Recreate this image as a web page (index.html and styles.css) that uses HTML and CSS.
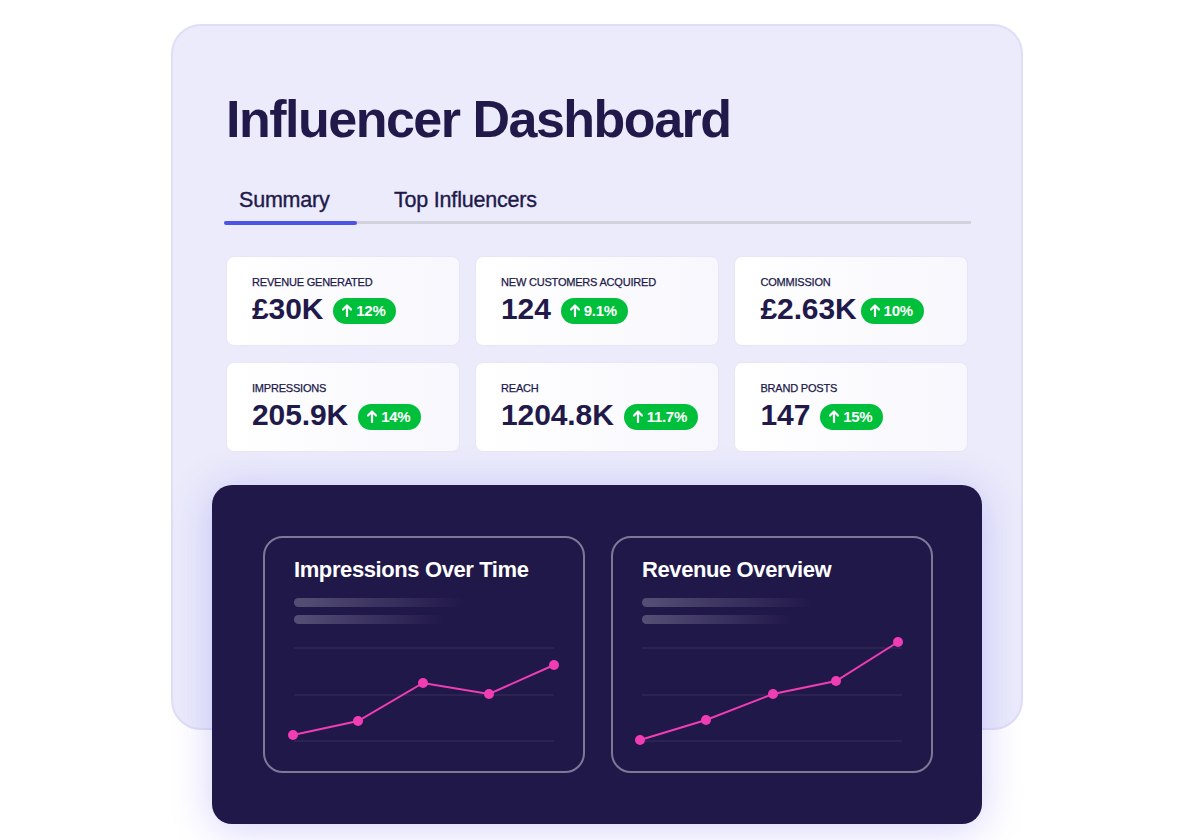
FILE: index.html
```html
<html>
<head>
  <title>Influencer Dashboard</title>
  <link rel="stylesheet" href="styles.css">
</head>
<body>
  <div class="page">
    <div class="board">
      <h1 class="title">Influencer Dashboard</h1>

      <div class="tabs">
        <div class="tab active">Summary</div>
        <div class="tab">Top Influencers</div>
      </div>

      <div class="stats">
        <div class="stat">
          <div class="stat-label">Revenue Generated</div>
          <div class="stat-row">
            <span class="stat-value">£30K</span>
            <span class="badge"><svg width="10" height="13" viewBox="0 0 10 13"><path d="M5 12V1.5M1 5.5L5 1.5L9 5.5" /></svg>12%</span>
          </div>
        </div>
        <div class="stat">
          <div class="stat-label">New Customers Acquired</div>
          <div class="stat-row">
            <span class="stat-value">124</span>
            <span class="badge"><svg width="10" height="13" viewBox="0 0 10 13"><path d="M5 12V1.5M1 5.5L5 1.5L9 5.5" /></svg>9.1%</span>
          </div>
        </div>
        <div class="stat">
          <div class="stat-label">Commission</div>
          <div class="stat-row tight">
            <span class="stat-value">£2.63K</span>
            <span class="badge"><svg width="10" height="13" viewBox="0 0 10 13"><path d="M5 12V1.5M1 5.5L5 1.5L9 5.5" /></svg>10%</span>
          </div>
        </div>
        <div class="stat">
          <div class="stat-label">Impressions</div>
          <div class="stat-row">
            <span class="stat-value">205.9K</span>
            <span class="badge"><svg width="10" height="13" viewBox="0 0 10 13"><path d="M5 12V1.5M1 5.5L5 1.5L9 5.5" /></svg>14%</span>
          </div>
        </div>
        <div class="stat">
          <div class="stat-label">Reach</div>
          <div class="stat-row">
            <span class="stat-value">1204.8K</span>
            <span class="badge"><svg width="10" height="13" viewBox="0 0 10 13"><path d="M5 12V1.5M1 5.5L5 1.5L9 5.5" /></svg>11.7%</span>
          </div>
        </div>
        <div class="stat">
          <div class="stat-label">Brand Posts</div>
          <div class="stat-row">
            <span class="stat-value">147</span>
            <span class="badge"><svg width="10" height="13" viewBox="0 0 10 13"><path d="M5 12V1.5M1 5.5L5 1.5L9 5.5" /></svg>15%</span>
          </div>
        </div>
      </div>

      <div class="charts">
        <div class="chart-card">
          <div class="chart-title">Impressions Over Time</div>
          <div class="skeleton long"></div>
          <div class="skeleton short"></div>
          <svg class="chart" width="260" height="110" viewBox="0 0 260 110">
            <line class="grid" x1="0" y1="8" x2="260" y2="8" />
            <line class="grid" x1="0" y1="55" x2="260" y2="55" />
            <line class="grid" x1="0" y1="101" x2="260" y2="101" />
            <polyline class="line" points="-1,95 64,81 129,43 195,54 260,25" />
            <circle class="dot" cx="-1" cy="95" r="5" />
            <circle class="dot" cx="64" cy="81" r="5" />
            <circle class="dot" cx="129" cy="43" r="5" />
            <circle class="dot" cx="195" cy="54" r="5" />
            <circle class="dot" cx="260" cy="25" r="5" />
          </svg>
        </div>
        <div class="chart-card">
          <div class="chart-title">Revenue Overview</div>
          <div class="skeleton long"></div>
          <div class="skeleton short"></div>
          <svg class="chart" width="260" height="110" viewBox="0 0 260 110">
            <line class="grid" x1="0" y1="8" x2="260" y2="8" />
            <line class="grid" x1="0" y1="55" x2="260" y2="55" />
            <line class="grid" x1="0" y1="101" x2="260" y2="101" />
            <polyline class="line" points="-2,100 64,80 131,54 194,41 256,2" />
            <circle class="dot" cx="-2" cy="100" r="5" />
            <circle class="dot" cx="64" cy="80" r="5" />
            <circle class="dot" cx="131" cy="54" r="5" />
            <circle class="dot" cx="194" cy="41" r="5" />
            <circle class="dot" cx="256" cy="2" r="5" />
          </svg>
        </div>
      </div>
    </div>
  </div>
</body>
</html>
```

FILE: styles.css
```css
body {
  margin: 0;
  padding: 0;
  background-color: #fff;
  font-family: "Liberation Sans", Arial, sans-serif;
  color: #21194a;
}

.page {
  padding-top: 24px;
}

.board {
  box-sizing: border-box;
  width: 852px;
  height: 706px;
  margin: 0 auto;
  padding: 62px 53px 0;
  background-color: #ebebfb;
  border: 2px solid #dedef8;
  border-radius: 30px;
}

.title {
  margin: 0;
  font-size: 52px;
  line-height: 62px;
  font-weight: bold;
  letter-spacing: -1.5px;
}

/* tabs */
.tabs {
  display: flex;
  gap: 22px;
  margin: 37px -3px 0 -2px;
  border-bottom: 3px solid #d4d1de;
}

.tab {
  position: relative;
  min-width: 133px;
  box-sizing: border-box;
  padding: 0 15px 8px;
  font-size: 21.5px;
  line-height: 26px;
  letter-spacing: -0.2px;
  -webkit-text-stroke: 0.35px #21194a;
}

.tab.active::after {
  content: "";
  position: absolute;
  left: 0;
  right: 0;
  bottom: -4px;
  height: 4px;
  border-radius: 2px;
  background-color: #4c55e3;
}

/* stat cards */
.stats {
  display: grid;
  grid-template-columns: repeat(3, 1fr);
  column-gap: 15.5px;
  row-gap: 16px;
  margin-top: 32px;
}

.stat {
  height: 90px;
  box-sizing: border-box;
  padding: 18px 20px 0 25px;
  background: linear-gradient(90deg, #ffffff, #f7f7fd);
  border: 1px solid #e6e6f6;
  border-radius: 8px;
}

.stat-label {
  font-size: 11px;
  line-height: 14px;
  text-transform: uppercase;
  letter-spacing: -0.2px;
  -webkit-text-stroke: 0.25px #21194a;
}

.stat-row {
  display: flex;
  align-items: center;
  gap: 10px;
  margin-top: 4px;
}

.stat-row.tight {
  gap: 4px;
}

.stat-value {
  font-size: 30px;
  line-height: 32px;
  font-weight: bold;
  letter-spacing: -0.1px;
}

.badge {
  display: flex;
  align-items: center;
  gap: 4px;
  height: 26px;
  margin-top: 3px;
  padding: 0 11px 0 9px;
  border-radius: 13px;
  background-color: #00bf3b;
  color: #fff;
  font-size: 15px;
  font-weight: bold;
  letter-spacing: -0.3px;
}

.badge svg path {
  fill: none;
  stroke: #fff;
  stroke-width: 2.2;
  stroke-linecap: round;
  stroke-linejoin: round;
}

/* charts */
.charts {
  display: flex;
  gap: 26px;
  margin: 33px -14px 0;
  padding: 51px;
  background-color: #21184a;
  border-radius: 20px;
  box-shadow: 0 4px 40px rgba(110, 100, 240, 0.3);
}

.chart-card {
  flex: 1;
  padding: 19px 29px 21px;
  border: 2px solid rgba(255, 255, 255, 0.42);
  border-radius: 20px;
}

.chart-title {
  color: #fff;
  font-size: 22px;
  line-height: 26px;
  font-weight: bold;
  letter-spacing: -0.4px;
}

.skeleton {
  height: 9.5px;
  border-radius: 5px;
  background: linear-gradient(90deg, rgba(255, 255, 255, 0.24), rgba(255, 255, 255, 0));
}

.skeleton.long {
  width: 170px;
  margin-top: 14.5px;
}

.skeleton.short {
  width: 150px;
  margin-top: 7.5px;
}

.chart {
  display: block;
  margin-top: 15.5px;
  overflow: visible;
}

.chart .grid {
  stroke: rgba(255, 255, 255, 0.1);
  stroke-width: 1;
}

.chart .line {
  fill: none;
  stroke: #f03db4;
  stroke-width: 2;
}

.chart .dot {
  fill: #f03db4;
}
```
